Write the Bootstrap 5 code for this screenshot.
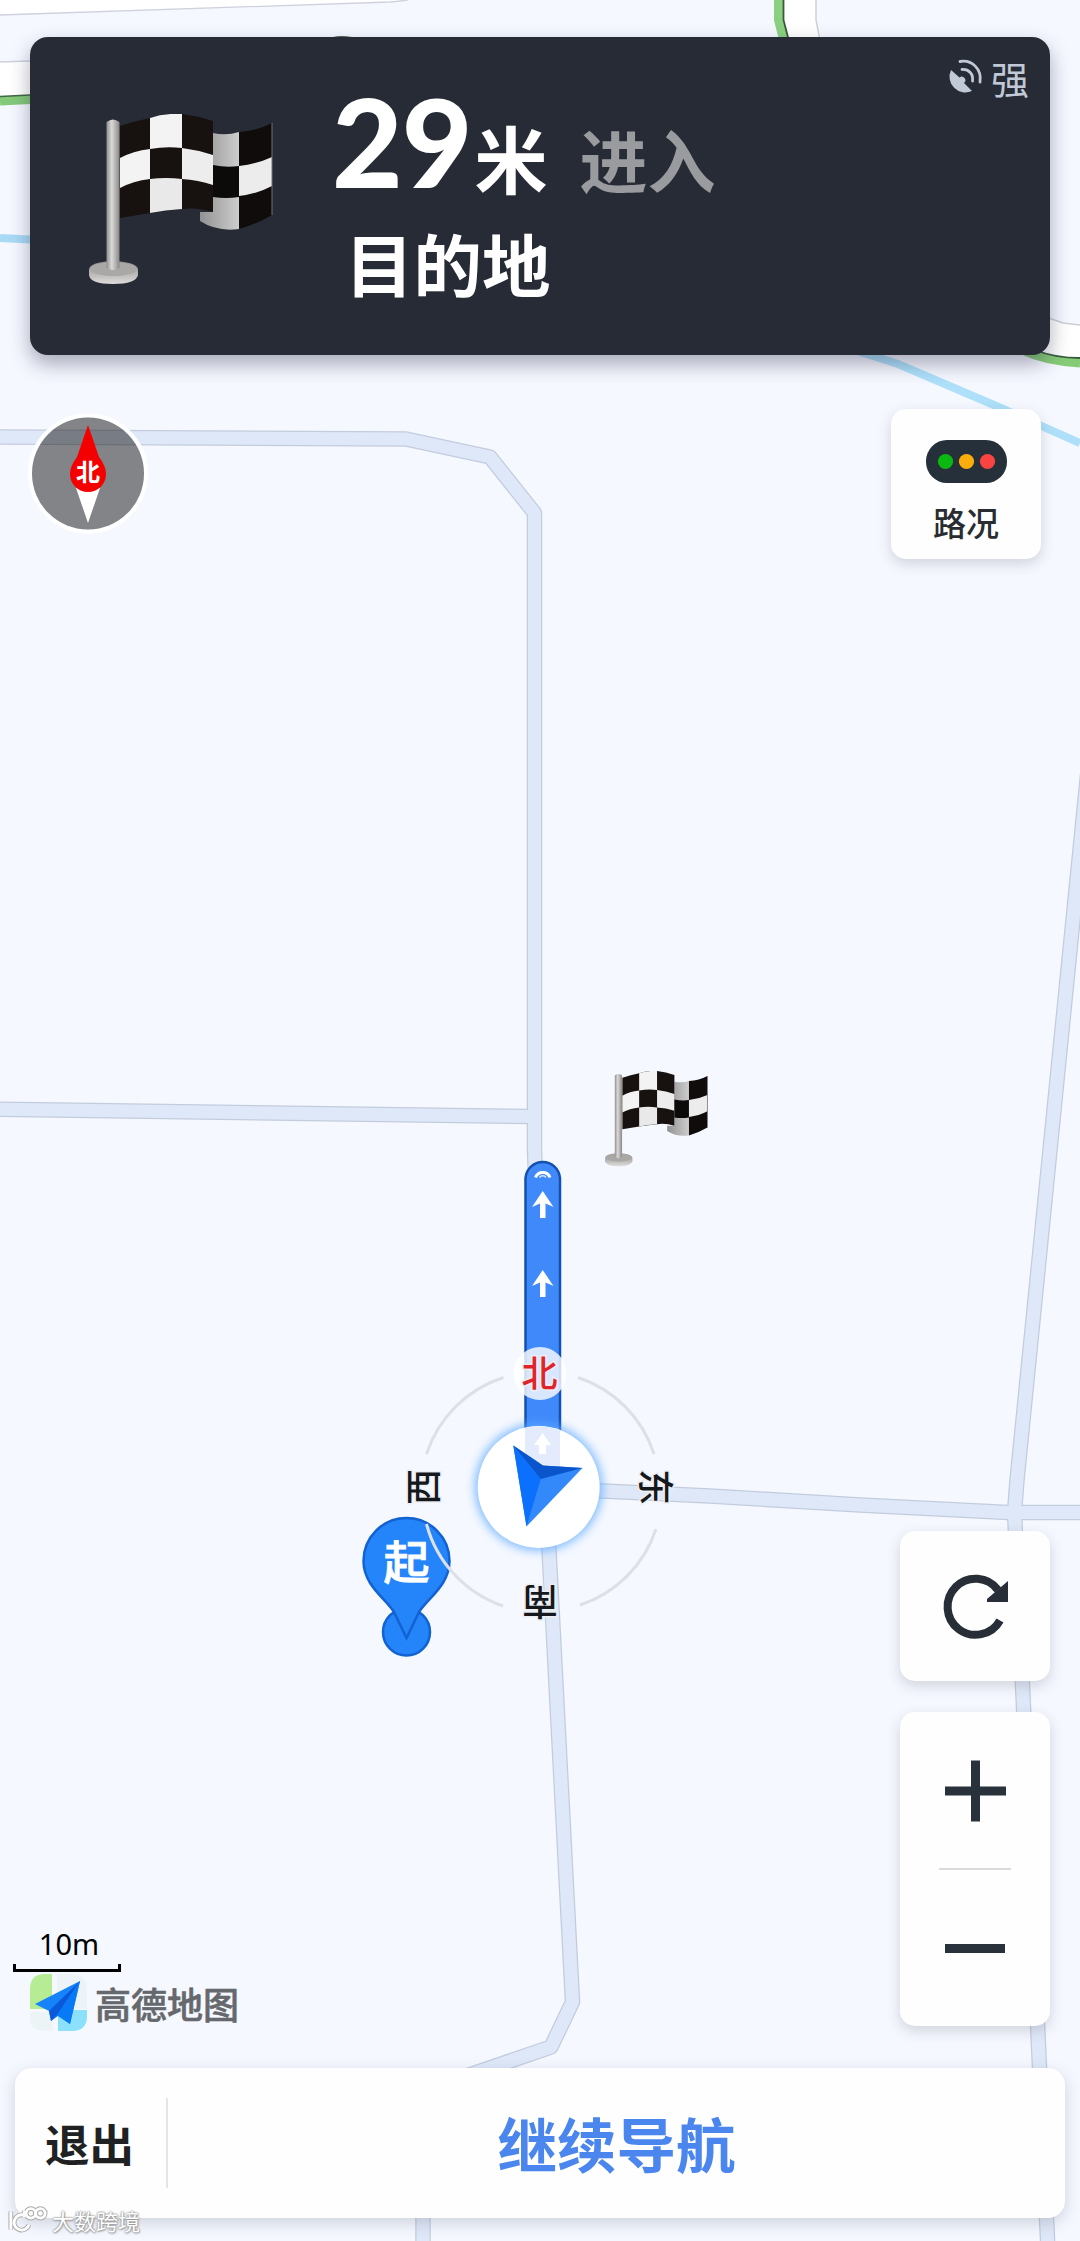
<!DOCTYPE html>
<html lang="zh-CN">

<head>
  <meta charset="UTF-8">
  <meta name="viewport" content="width=device-width, initial-scale=1.0">
  <title>导航</title>

  <!-- Bootstrap CSS -->
  <link href="https://cdn.jsdelivr.net/npm/bootstrap@5.3.0/dist/css/bootstrap.min.css" rel="stylesheet">

  <style>
    body {
      font-family: "Noto Sans CJK SC", "Noto Sans", sans-serif;
      background-color: #f5f8ff;
      line-height: 1;
    }

    .nav-screen {
      height: 2241px;
    }

    .map-canvas {
      width: 1080px;
      height: 2241px;
    }

    .road-edge {
      fill: none;
      stroke: #c3ccdd;
      stroke-width: 15.5;
      stroke-linejoin: round;
    }

    .road-fill {
      fill: none;
      stroke: #dfe8f8;
      stroke-width: 13;
      stroke-linejoin: round;
    }

    .dir-label {
      font-size: 36px;
      font-weight: 500;
      text-anchor: middle;
      fill: #15181c;
      paint-order: stroke;
      stroke: #eceef2;
      stroke-width: 3px;
    }

    .dir-north {
      fill: #e0242b;
    }

    /* Turn panel */
    .turn-panel {
      height: 318px;
      margin: 37px 30px 0;
      padding-left: 59px;
      background-color: #262b36;
      border-radius: 18px;
      box-shadow: 0 9px 20px rgba(40, 40, 70, .38);
    }

    .turn-flag {
      width: 184px;
      height: 172px;
      margin-top: 77px;
    }

    .turn-text {
      margin-left: 59px;
      padding-top: 37px;
    }

    .turn-line {
      height: 135px;
    }

    .turn-number {
      font: 900 122px/135px "Lato", sans-serif;
      letter-spacing: -1px;
    }

    .turn-unit {
      font-size: 73px;
      margin-left: 3px;
    }

    .turn-action {
      font-size: 68px;
      margin-left: 32px;
      color: #999b9e;
    }

    .turn-target {
      font-size: 68.5px;
      line-height: 90px;
      margin: 9px 0 0 13px;
    }

    .gps-state {
      margin: 20px 21px 0 0;
      height: 42px;
      color: #c0c9d5;
      font-size: 38px;
    }

    .map-tools {
      margin: 54px 39px 0 28px;
    }

    .compass {
      width: 120px;
      height: 124px;
      margin-top: 3px;
    }

    /* White floating buttons */
    .float-card {
      width: 150px;
      background-color: #fefefe;
      border-radius: 15px;
      box-shadow: 0 5px 14px rgba(50, 50, 60, .18);
    }

    .traffic-card {
      height: 150px;
      padding-top: 31px;
    }

    .traffic-name {
      font-size: 33px;
      font-weight: 500;
      line-height: 40px;
      margin-top: 19px;
      color: #292d31;
    }

    .refresh-card {
      height: 150px;
    }

    .zoom-card {
      height: 314px;
      margin-top: 31px;
    }

    .zoom-rule {
      width: 72px;
      height: 2px;
      background-color: #d9dadc;
    }

    .side-row {
      padding: 0 30px 0 13px;
    }

    .scale-block {
      margin-bottom: -7px;
    }

    .scale-text {
      font: 29px/36px "Noto Sans", sans-serif;
      width: 108px;
      margin-left: 2px;
      color: #000;
    }

    .scale-bar {
      width: 108px;
      height: 8px;
      margin-top: 2px;
      border: solid #000;
      border-width: 0 3px 3px;
    }

    .map-brand {
      margin: 1px 0 0 16px;
      height: 60px;
      font-size: 36px;
      font-weight: 500;
      line-height: 1;
      color: #65686c;
      -webkit-text-stroke: .6px #65686c;
    }

    .brand-mark {
      margin-right: 6px;
    }

    /* Bottom panel */
    .bottom-panel {
      height: 150px;
      margin: 42px 15px 23px;
      background-color: #fefefe;
      border-radius: 17px;
      box-shadow: 0 5px 16px rgba(50, 60, 80, .2);
    }

    .exit-btn {
      width: 151px;
      font-size: 44.5px;
      color: #202122;
      padding-right: 2px;
    }

    .exit-rule {
      width: 2px;
      height: 90px;
      background-color: #e5e5e6;
    }

    .resume-btn {
      font-size: 59.5px;
      color: #4a86ee;
    }

    .stamp {
      left: 8px;
      bottom: 6px;
      font-size: 22px;
      color: #fff;
      text-shadow: 0 0 2px #888, 0 0 2px #999, 1px 1px 2px #aaa;
    }
  </style>
</head>

<body>
  <main class="nav-screen position-relative overflow-hidden d-flex flex-column">

    <!-- Map -->
    <svg class="map-canvas position-absolute top-0 start-0" viewBox="0 0 1080 2241">
      <defs>
        <linearGradient id="poleShade">
          <stop offset="0" stop-color="#8e8e8e" />
          <stop offset=".4" stop-color="#dcdad8" />
          <stop offset="1" stop-color="#8a8886" />
        </linearGradient>
        <linearGradient id="baseShade" x2="0" y2="1">
          <stop offset="0" stop-color="#8a8988" />
          <stop offset=".5" stop-color="#b5b3b1" />
          <stop offset="1" stop-color="#dedddc" />
        </linearGradient>
        <linearGradient id="foldShade">
          <stop offset="0" stop-color="#929292" />
          <stop offset="1" stop-color="#cdcdcd" />
        </linearGradient>
        <filter id="blueGlow" x="-30%" y="-30%" width="160%" height="160%">
          <feGaussianBlur stdDeviation="5" />
        </filter>
        <symbol id="raceFlag" viewBox="0 0 184 172">
          <path d="M124 19Q137 22 150 18V115Q128 118 111 107V98L124 98Z" fill="url(#foldShade)" />
          <path d="M31 12Q46 7 61 4Q75 -1 93 0Q109 2 124 7V98Q109 93 93 95Q77 97 61 99L31 104Z" fill="#17110f" />
          <path d="M61 4Q75 -1 93 0V34Q77 32 61 35Z" fill="#f3f3f3" />
          <path d="M31 44Q44 37 61 35V65Q44 67 31 74Z" fill="#f3f3f3" />
          <path d="M93 34Q109 36 124 41V71Q109 66 93 65Z" fill="#ededed" />
          <path d="M61 65Q77 63 93 65V95Q77 96 61 99Z" fill="#e9e9e9" />
          <path d="M124 51Q137 54 150 52V83Q137 85 124 83Z" fill="#0d0b0a" />
          <path d="M150 18Q168 17 183 9V101Q168 110 150 115Z" fill="#100c0b" />
          <path d="M150 52Q168 50 183 43V72Q168 80 150 82Z" fill="#ececec" />
          <path d="M183 9V101" stroke="#77706d" stroke-width="1" />
          <path d="M0 156Q0 148 24 147Q49 148 49 156V161Q47 170 24 170Q1 170 0 161Z" fill="url(#baseShade)" />
          <ellipse cx="24.500" cy="155" rx="23" ry="7" fill="#aaa8a6" />
          <path d="M17.500 8Q24 3 30.500 8V154Q24 158 17.500 154Z" fill="url(#poleShade)" />
        </symbol>
      </defs>

      <rect width="1080" height="2241" fill="#f5f8ff" />

      <!-- Main roads and water -->
      <path d="M0 15L390 2Q400 1 408 0H0Z" fill="#fff" />
      <path d="M0 15L390 2Q400 1 408 0" fill="none" stroke="#cfd1de" stroke-width="1.300" />
      <path d="M0 62L60 60V93L0 97Z" fill="#fff" />
      <path d="M0 62L60 60" stroke="#cfd1de" stroke-width="1.300" />
      <path d="M0 101L60 98" stroke="#83c979" stroke-width="9" />
      <path d="M0 96.500L60 93.500" stroke="#3f6741" stroke-width="1.500" />
      <path d="M0 238L60 241" stroke="#a8daf5" stroke-width="8" />
      <path d="M333 37Q341 35 352 37Z" fill="#4c5a50" />
      <path d="M782 0V20L789 45H824L816 20V0Z" fill="#fff" />
      <path d="M816 0V20L821 45" fill="none" stroke="#cfd0d6" stroke-width="1.500" />
      <path d="M778.500 0V20L785 45" fill="none" stroke="#8bd081" stroke-width="9" />
      <path d="M783.500 0V20L790 45" fill="none" stroke="#365b38" stroke-width="1.800" />
      <path d="M1040 315L1063 323Q1071 324 1080 325V360L1040 350Z" fill="#fff" />
      <path d="M1040 315L1063 323Q1071 324 1080 325" fill="none" stroke="#cdced5" stroke-width="1.500" />
      <path d="M1020 349Q1045 361 1080 363" fill="none" stroke="#86cc77" stroke-width="9" />
      <path d="M1035 350Q1055 358 1080 358" fill="none" stroke="#365b38" stroke-width="1.800" />
      <path d="M845 347L898 364L1001 408L1080 443" fill="none" stroke="#aee0fa" stroke-width="8" />

      <!-- Side roads -->
      <g class="road-edge">
        <path d="M-10 1109L529 1116.500" />
        <path d="M-10 437L406 439L490 457L534.500 513V1150L549 1550L572.500 2002L551 2047L440 2085Q423 2090 423 2110V2250" />
        <path d="M1094 710L1061 1040L1017 1480L1014.500 1512L1023 1696L1038 2035L1048 2250" />
        <path d="M560 1489L710 1496L860 1505L1008 1512.500H1090" />
      </g>
      <g class="road-fill">
        <path d="M-10 1109L533 1116.500" />
        <path d="M-10 437L406 439L490 457L534.500 513V1150L549 1550L572.500 2002L551 2047L440 2085Q423 2090 423 2110V2250" />
        <path d="M1094 710L1061 1040L1017 1480L1014.500 1512L1023 1696L1038 2035L1048 2250" />
        <path d="M560 1489L710 1496L860 1505L1008 1512.500H1090" />
      </g>

      <!-- Route -->
      <path d="M525.500 1490V1178A17.300 17.300 0 0 1 560 1178V1490Z" fill="#3f89fb" stroke="#1450ae" stroke-width="2.500" />
      <path d="M535.500 1177.500A7.800 7.800 0 0 1 550 1177.500" fill="none" stroke="#fff" stroke-width="3" />
      <path d="M539.500 1177.500A3.800 3.800 0 0 1 546 1177.500" fill="none" stroke="#d6e6ff" stroke-width="1.500" />
      <g fill="#fff">
        <path id="stepArrow" d="M542.700 1191L553.500 1207L545.500 1203.500V1218H540V1203.500L532 1207Z" />
        <use href="#stepArrow" y="79" />
      </g>

      <use href="#raceFlag" x="605" y="1071" width="103" height="96.300" />

      <!-- Start pin -->
      <g fill="#2485fb" stroke="#1262d2" stroke-width="2.500">
        <circle cx="406.500" cy="1632" r="23.500" />
        <path d="M406.500 1638L394 1612C385 1598 363.500 1585 363.500 1561A43 43 0 0 1 449.500 1561C449.500 1585 428 1598 419 1612Z" />
      </g>
      <text x="406.500" y="1579" font-size="46" font-weight="500" text-anchor="middle" fill="#fff" stroke="#fff" stroke-width=".8">起</text>

      <!-- Direction ring -->
      <g fill="none" stroke="#dde0e7" stroke-width="3">
        <path d="M503.500 1377.500A119 119 0 0 0 426.500 1454" />
        <path d="M578 1377.500A119 119 0 0 1 654 1454" />
        <path d="M426.500 1524A119 119 0 0 0 503 1606" />
        <path d="M656 1529A119 119 0 0 1 580 1605" />
      </g>
      <circle cx="540" cy="1373.500" r="26.500" fill="#fff" fill-opacity=".8" />
      <text class="dir-label dir-north" x="539.500" y="1387">北</text>
      <text class="dir-label" transform="translate(423.500 1487) rotate(-90)" y="13.500">西</text>
      <text class="dir-label" transform="translate(655 1487) rotate(90)" y="13.500">东</text>
      <text class="dir-label" transform="translate(540 1601) rotate(180)" y="13.500">南</text>

      <!-- Own position -->
      <circle cx="538.700" cy="1487" r="64" fill="#5faaff" opacity=".75" filter="url(#blueGlow)" />
      <circle cx="538.700" cy="1487" r="61" fill="#fff" />
      <path d="M525 1428Q542 1424 560 1430V1468L525 1460Z" fill="#e3ebfc" />
      <path d="M542.700 1433L551 1445H546V1454H539V1445H534Z" fill="#fff" />
      <path d="M513.300 1445.500L543 1465.500L582.500 1468L526.500 1526.500Z" fill="#3389fa" />
      <path d="M513.300 1445.500L540.700 1479L526.500 1526.500Z" fill="#0a70fd" />
      <path d="M513.300 1445.500L543 1465.500L582.500 1468L540.700 1479Z" fill="#0a55cb" />
    </svg>

    <!-- Next turn -->
    <header class="turn-panel position-relative d-flex text-white flex-shrink-0">
      <svg class="turn-flag flex-shrink-0">
        <use href="#raceFlag" width="184" height="172" />
      </svg>
      <div class="turn-text flex-grow-1">
        <div class="turn-line d-flex align-items-baseline fw-bold">
          <span class="turn-number">29</span>
          <span class="turn-unit">米</span>
          <span class="turn-action">进入</span>
        </div>
        <div class="turn-target fw-bold">目的地</div>
      </div>
      <div class="gps-state d-flex align-items-center">
        <svg width="38" height="40" viewBox="0 0 38 40" class="me-2" fill="none" stroke="currentColor" stroke-width="2.800" stroke-linecap="round">
          <path d="M6 12L14.500 19.500A3.500 3.500 0 1 1 19 25L27 33A15.800 15.800 0 0 1 6 12Z" fill="currentColor" stroke="none" />
          <path d="M17 11.500C24 11 28.500 16 27.500 23" />
          <path d="M15 3.500C27 1.500 37 11 35 24" />
        </svg>
        <span>强</span>
      </div>
    </header>

    <!-- Compass and traffic switch -->
    <section class="map-tools position-relative d-flex justify-content-between">
      <svg class="compass" viewBox="0 0 120 124">
        <circle cx="60" cy="61.500" r="58" fill="none" stroke="#fff" stroke-width="4" />
        <circle cx="60" cy="61.500" r="56" fill="#222" fill-opacity=".54" />
        <path d="M48 76L60 111L72 76Z" fill="#fff" />
        <path d="M60 13L71 45Q78 54 78 62A18 18 0 0 1 42 62Q42 54 49 45Z" fill="#f40000" />
        <text x="60" y="69" font-size="24" font-weight="700" text-anchor="middle" fill="#fff">北</text>
      </svg>
      <div class="float-card traffic-card d-flex flex-column align-items-center">
        <svg width="81" height="43">
          <rect width="81" height="43" rx="21" fill="#25303b" />
          <circle cx="19.500" cy="21.500" r="7.600" fill="#0bb80f" />
          <circle cx="40.500" cy="21.500" r="7.600" fill="#f9ae0c" />
          <circle cx="61.500" cy="21.500" r="7.600" fill="#fb4341" />
        </svg>
        <div class="traffic-name">路况</div>
      </div>
    </section>

    <!-- Scale, logo and zoom -->
    <section class="side-row position-relative d-flex justify-content-between align-items-end mt-auto">
      <div class="scale-block">
        <div class="scale-text text-center">10m</div>
        <div class="scale-bar"></div>
        <div class="map-brand d-flex align-items-center">
          <svg width="60" height="60" viewBox="0 0 60 60" class="brand-mark">
            <path d="M1 36V16Q1 1 16 1H23V36Z" fill="#b5ec94" />
            <path d="M28 1H43Q58 1 58 16V36H28Z" fill="#edf4f8" />
            <path d="M1 39H24V58H16Q1 58 1 45Z" fill="#edf4f6" />
            <path d="M29 37H58V43Q58 58 43 58H29Z" fill="#8be1fb" />
            <path d="M51 8L6 31L20 38L22 48L29 43L41 51Z" fill="#1683fb" />
            <path d="M51 8L20 38L22 48L28 42Z" fill="#0959da" />
            <path d="M51 8L28 42L41 51Z" fill="#087af5" />
          </svg>
          <span>高德地图</span>
        </div>
      </div>
      <div>
        <div class="float-card refresh-card d-flex align-items-center justify-content-center">
          <svg width="72" height="72" viewBox="0 0 72 72">
            <path d="M61 50.500A28 28 0 1 1 59 20" fill="none" stroke="#272e37" stroke-width="8" />
            <path d="M69 11V32H48V29L55 23Z" fill="#272e37" />
          </svg>
        </div>
        <div class="float-card zoom-card d-flex flex-column align-items-center justify-content-between">
          <svg width="150" height="156">
            <path d="M45 79H106M75.500 48.500V109.500" stroke="#29323b" stroke-width="9" />
          </svg>
          <div class="zoom-rule"></div>
          <svg width="150" height="156">
            <path d="M45 78.500H105" stroke="#29323b" stroke-width="9" />
          </svg>
        </div>
      </div>
    </section>

    <!-- Exit / continue -->
    <footer class="bottom-panel position-relative d-flex align-items-center flex-shrink-0 fw-bold">
      <div class="exit-btn text-center">退出</div>
      <div class="exit-rule"></div>
      <div class="resume-btn flex-grow-1 text-center">继续导航</div>
    </footer>

    <div class="stamp position-absolute d-flex align-items-center">
      <svg width="40" height="30" viewBox="0 0 42 30" class="me-1" fill="none">
        <g stroke="#aaa" stroke-width="5">
          <path d="M3 6V25M17 10A8 8 0 1 0 22 20M17 5V12" />
          <circle cx="24" cy="8" r="5" />
          <circle cx="34" cy="8" r="5" />
        </g>
        <g stroke="#fff" stroke-width="3">
          <path d="M3 6V25M17 10A8 8 0 1 0 22 20M17 5V12" />
          <circle cx="24" cy="8" r="5" />
          <circle cx="34" cy="8" r="5" />
        </g>
      </svg>
      <span>大数跨境</span>
    </div>
  </main>

  <!-- Bootstrap JS -->
  <script src="https://cdn.jsdelivr.net/npm/bootstrap@5.3.0/dist/js/bootstrap.bundle.min.js"></script>
</body>

</html>
